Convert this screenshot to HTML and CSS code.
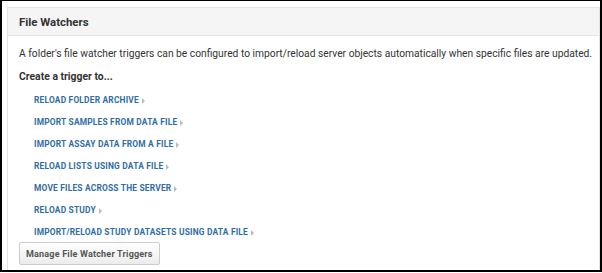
FILE: index.html
```html
<!DOCTYPE html>
<html lang="en">

<head>
    <meta charset="UTF-8">
    <meta name="viewport" content="width=device-width, initial-scale=1.0">
    <title>File Watchers</title>
    <link rel="stylesheet" href="styles.css">
</head>

<body>
    <div class="frame">
        <div class="panel">
            <div class="panel-heading">File Watchers</div>
            <div class="panel-body">
                <p class="intro">A folder's file watcher triggers can be configured to import/reload server objects automatically when specific files are updated.</p>
                <p class="subtitle">Create a trigger to...</p>
                <ul class="trigger-list">
                    <li><a href="#">Reload folder archive</a><span class="caret"></span></li>
                    <li><a href="#">Import samples from data file</a><span class="caret"></span></li>
                    <li><a href="#">Import assay data from a file</a><span class="caret"></span></li>
                    <li><a href="#">Reload lists using data file</a><span class="caret"></span></li>
                    <li><a href="#">Move files across the server</a><span class="caret"></span></li>
                    <li><a href="#">Reload study</a><span class="caret"></span></li>
                    <li><a href="#">Import/reload study datasets using data file</a><span class="caret"></span></li>
                </ul>
                <button class="manage-btn">Manage File Watcher Triggers</button>
            </div>
        </div>
    </div>
</body>

</html>
```

FILE: styles.css
```css
html,
body {
    margin: 0;
    padding: 0;
    background: #fff;
}

body {
    font-family: Roboto, "Liberation Sans", Arial, sans-serif;
    color: #333;
}

.frame {
    width: 602px;
    height: 272px;
    box-sizing: border-box;
    border: 2px solid #000;
    border-top-width: 1px;
    padding: 6px 0 0 5px;
    overflow: hidden;
}

.panel {
    border: 1px solid #e3e3e3;
    border-bottom: none;
    height: 100%;
    box-sizing: border-box;
}

.panel-heading {
    background-color: #f5f5f5;
    border-bottom: 1px solid #e3e3e3;
    font-size: 11.4px;
    font-weight: bold;
    padding: 7px 11px 6px;
    line-height: 14px;
}

.panel-body {
    padding: 11px 2px 0 11px;
}

.intro {
    font-size: 10.25px;
    margin: 0 0 9px;
    line-height: 14px;
    white-space: nowrap;
}

.subtitle {
    font-size: 10.4px;
    font-weight: bold;
    margin: 0 0 3px;
    line-height: 14px;
}

.trigger-list {
    list-style: none;
    margin: 0;
    padding: 0 0 0 15px;
}

.trigger-list li {
    height: 22px;
    line-height: 22px;
}

.trigger-list a {
    font-size: 8.4px;
    font-weight: bold;
    color: #2f6ea5;
    text-transform: uppercase;
    text-decoration: none;
    letter-spacing: 0.2px;
}

.caret {
    display: inline-block;
    margin-left: 3px;
    border-left: 3px solid #bbb;
    border-top: 3px solid transparent;
    border-bottom: 3px solid transparent;
    vertical-align: -1px;
}

.manage-btn {
    margin-top: 1px;
    font-family: inherit;
    font-size: 9px;
    font-weight: bold;
    color: #555;
    padding: 3px 6px;
    height: 23px;
    border: 1px solid #ccc;
    border-radius: 2px;
    background: linear-gradient(#fff, #ececec);
    letter-spacing: 0.2px;
}
```
